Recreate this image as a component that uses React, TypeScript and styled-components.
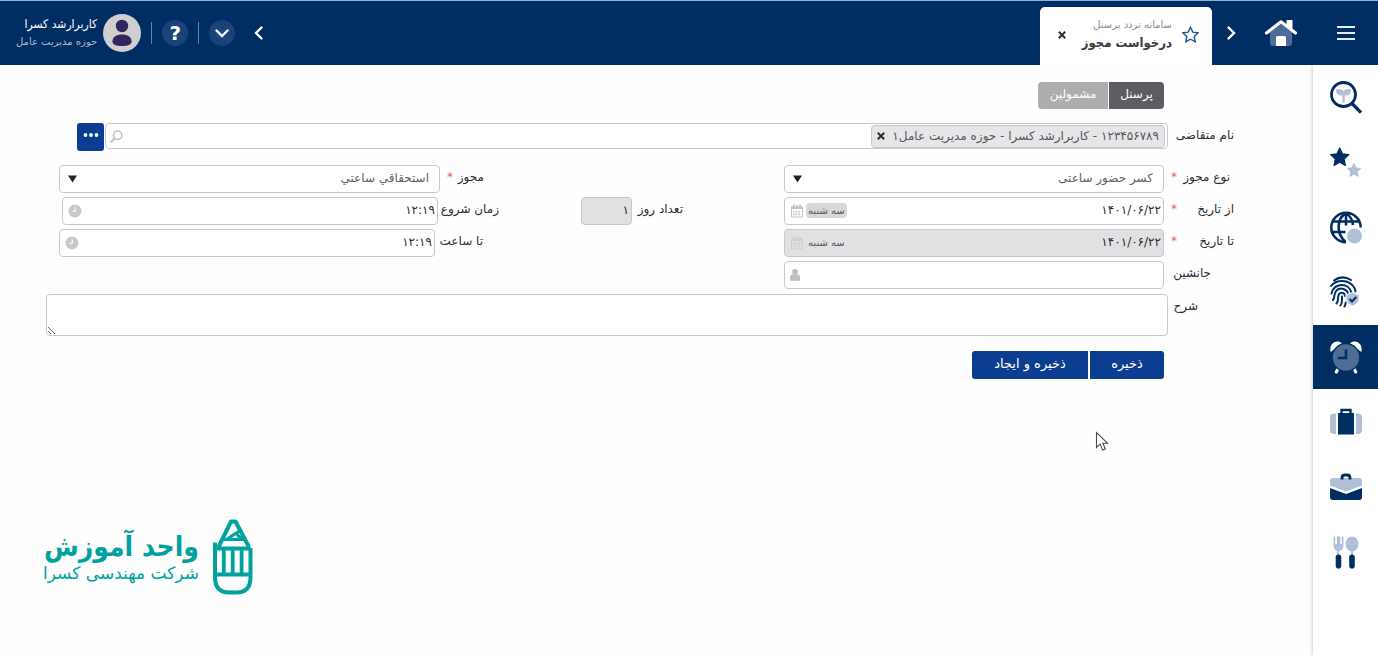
import React from "react";
import styled, { createGlobalStyle } from "styled-components";

const navy = "#002e62";
const blue = "#0b3e91";
const mist = "#b1bfd6";
const steel = "#4d6d96";
const teal = "#00a19f";
const line = "#c9c7cd";
const ink = "#2c2c34";
const condensed = `"DejaVu Sans Condensed", "DejaVu Sans", sans-serif`;

const GlobalStyle = createGlobalStyle`
  * { box-sizing: border-box; }
  html, body, #root { height: 100%; }
  body { margin: 0; background: #fefefe; color: ${ink}; }
  body, button, input, select, textarea {
    font-family: "DejaVu Sans", sans-serif;
    font-size: 12px;
  }
  button { border: 0; padding: 0; cursor: pointer; }
`;

const Page = styled.div`
  direction: rtl;
  display: flex;
  flex-direction: column;
  min-height: 100%;
`;

const Header = styled.header`
  display: flex;
  align-items: center;
  height: 65px;
  background: ${navy};
  border-top: 1px solid #8fb4d6;
  color: #fff;
`;

const HeaderButton = styled.button<{ $width: number }>`
  display: flex;
  align-items: center;
  justify-content: center;
  width: ${(p) => p.$width}px;
  height: 64px;
  background: transparent;
  color: #fff;
`;

const PageTab = styled.div`
  display: flex;
  align-items: center;
  align-self: flex-end;
  width: 172px;
  height: 58px;
  padding: 0 13px 3px 18px;
  border-radius: 5px 5px 0 0;
  background: #fff;
  color: #3a3a42;
`;

const TabTitles = styled.div`
  flex: 1;
  padding-inline-start: 10px;
  white-space: nowrap;
`;

const Overline = styled.div`
  font-size: 10px;
  line-height: 16px;
  color: #8b8b92;
`;

const TabTitle = styled.div`
  font-family: ${condensed};
  font-size: 13px;
  font-weight: bold;
  line-height: 20px;
`;

const PlainButton = styled.button`
  display: flex;
  background: transparent;
  color: inherit;
`;

const Tools = styled.div`
  display: flex;
  align-items: center;
  margin-inline-start: auto;
  padding-left: 16px;
`;

const RoundButton = styled.button`
  display: flex;
  align-items: center;
  justify-content: center;
  width: 26px;
  height: 26px;
  border-radius: 50%;
  background: #1a437a;
  color: #fff;
  font-size: 20px;
  font-weight: bold;
  line-height: 26px;
`;

const Divider = styled.span`
  width: 1px;
  height: 22px;
  margin: 0 10px;
  background: #6885a8;
`;

const UserName = styled.div`
  margin-inline-start: 6px;
  font-family: ${condensed};
  font-size: 12px;
  line-height: 18px;
  white-space: nowrap;
`;

const UserUnit = styled.div`
  font-family: "DejaVu Sans", sans-serif;
  font-size: 10px;
  line-height: 18px;
  color: #a9bdd6;
`;

const Body = styled.div`
  display: flex;
  flex: 1;
`;

const Sidebar = styled.nav`
  display: flex;
  flex-direction: column;
  gap: 1px;
  width: 65px;
  background: #fff;
  box-shadow: 0 0 4px rgba(60, 50, 70, 0.35);
`;

const SidebarLink = styled.a<{ $active?: boolean }>`
  display: flex;
  align-items: center;
  justify-content: center;
  height: 64px;
  background: ${(p) => (p.$active ? navy : "transparent")};
`;

const Main = styled.main`
  display: flex;
  flex: 1;
  flex-direction: column;
  min-width: 0;
  padding-top: 17px;
`;

const Segments = styled.div`
  display: flex;
  gap: 1px;
  margin-inline-start: 149px;
`;

const Segment = styled.button<{ $active?: boolean; $width: number }>`
  width: ${(p) => p.$width}px;
  height: 27px;
  background: ${(p) => (p.$active ? "#5c5d63" : "#adadad")};
  color: #fff;
  line-height: 24px;
  padding-bottom: 3px;
  &:first-child { border-radius: 0 4px 4px 0; }
  &:last-child { border-radius: 4px 0 0 4px; }
`;

const Form = styled.form`
  display: flex;
  flex-direction: column;
  padding: 14px 79px 0 46px;
`;

const Row = styled.div`
  display: flex;
  align-items: flex-start;
`;

const Label = styled.label<{ $width: number; $indent?: number }>`
  display: flex;
  flex: none;
  justify-content: space-between;
  width: ${(p) => p.$width}px;
  padding-inline: ${(p) => p.$indent ?? 0}px 7px;
  line-height: 24px;
  white-space: nowrap;
`;

const Required = styled.span`
  color: #f0605c;
`;

const Control = styled.div<{ $muted?: boolean; $width?: number }>`
  display: flex;
  align-items: center;
  flex: ${(p) => (p.$width ? "none" : "1")};
  width: ${(p) => (p.$width ? p.$width + "px" : "auto")};
  min-width: 0;
  height: 28px;
  padding: 0 2px 0 5px;
  border: 1px solid ${line};
  border-radius: 4px;
  background: ${(p) => (p.$muted ? "#e1e0e2" : "#fff")};
`;

const TextInput = styled.input`
  flex: 1;
  min-width: 0;
  width: 100%;
  height: 24px;
  padding: 0 0 2px;
  border: 0;
  outline: 0;
  background: transparent;
  color: ${ink};
`;

const Select = styled.select`
  flex: 1;
  min-width: 0;
  height: 26px;
  padding: 0 8px 2px;
  border: 0;
  outline: 0;
  appearance: none;
  background: transparent;
  color: #5f5f66;
`;

const ArrowBox = styled.span`
  display: flex;
  padding: 0 3px;
`;

const DayTag = styled.span<{ $plain?: boolean }>`
  margin-inline-end: 2px;
  margin-bottom: 2px;
  padding: 0 2px;
  border-radius: 4px;
  background: ${(p) => (p.$plain ? "transparent" : "#d8d7d9")};
  color: #55555c;
  font-size: 10px;
  line-height: 15px;
  white-space: nowrap;
`;

const SearchBox = styled(Control)`
  height: 26px;
  padding-left: 4px;
`;

const Chip = styled.span`
  display: flex;
  align-items: center;
  gap: 7px;
  height: 23px;
  padding: 0 5px;
  border: 1px solid ${line};
  border-radius: 4px;
  background: #e6e5e7;
  color: #55555c;
  white-space: nowrap;
`;

const MoreButton = styled.button`
  display: flex;
  justify-content: center;
  width: 27px;
  height: 28px;
  margin: 0 1px 0 31px;
  padding-top: 9px;
  border-radius: 3px;
  background: ${blue};
`;

const Fields = styled.div`
  display: grid;
  grid-template-columns: minmax(0, 45fr) 285px minmax(0, 44fr);
  gap: 4px 0;
  margin: 14px 0 5px 13px;
`;

const PrimaryField = styled(Row)`
  grid-column: 1;
`;

const DaysField = styled(Row)`
  grid-column: 2;
  padding-inline-start: 101px;
`;

const SecondaryField = styled(Row)<{ $indent?: number; $end?: number }>`
  grid-column: 3;
  padding-inline: ${(p) => p.$indent ?? 0}px ${(p) => p.$end ?? 0}px;
`;

const Description = styled.textarea`
  flex: 1;
  height: 42px;
  border: 1px solid ${line};
  border-radius: 4px;
  outline: 0;
  background: #fff;
`;

const Actions = styled.div`
  display: flex;
  gap: 2px;
  margin: 15px 70px 0 0;
`;

const ActionButton = styled.button<{ $width: number }>`
  width: ${(p) => p.$width}px;
  height: 28px;
  padding-bottom: 3px;
  background: ${blue};
  color: #fff;
  font-size: 13px;
  &:first-child { border-radius: 0 3px 3px 0; }
  &:last-child { border-radius: 3px 0 0 3px; }
`;

const Brand = styled.footer`
  display: flex;
  align-items: center;
  align-self: flex-end;
  gap: 13px;
  margin: 139px 0 0 43px;
  color: ${teal};
  white-space: nowrap;
`;

const BrandName = styled.div`
  font-family: ${condensed};
  font-size: 28px;
  font-weight: bold;
  line-height: 32px;
`;

const BrandCompany = styled.div`
  font-size: 17px;
  line-height: 20px;
`;

const Pointer = styled.svg`
  position: absolute;
  left: 1095px;
  top: 431px;
`;

const Chevron = ({ d }: { d: string }) => (
  <svg width="16" height="16" viewBox="0 0 16 16" fill="none" stroke="currentColor" strokeWidth="2.4" strokeLinecap="round">
    <path d={d} />
  </svg>
);

const Cross = ({ size }: { size: number }) => (
  <svg width={size} height={size} viewBox="0 0 8 8" stroke="#2c2c34" strokeWidth="2">
    <path d="M.8.8l6.4 6.4M7.2.8L.8 7.2" />
  </svg>
);

const SelectArrow = () => (
  <ArrowBox>
    <svg width="9" height="8" viewBox="0 0 9 8"><path d="M0 .5h9L4.5 7.5z" fill="#222" /></svg>
  </ArrowBox>
);

const CalendarIcon = ({ color }: { color: string }) => (
  <svg width="14" height="14" viewBox="0 0 14 14">
    <path d="M1 2.5h12V5H1zM3 .5h1.8v2H3zM9.2.5H11v2H9.2zM6.2 1h1.6v2H6.2z" fill={color} />
    <path d="M1.5 5v8h11V5" fill="none" stroke={color} />
    <path d="M3 7.6h8M3 10.4h8" fill="none" stroke={color} strokeWidth="1.8" strokeDasharray="1.6 1" />
  </svg>
);

const ClockIcon = () => (
  <svg width="14" height="14" viewBox="0 0 14 14">
    <circle cx="7" cy="7" r="6.5" fill="#c9c7ca" />
    <path d="M7.3 3.2v4H4.5" fill="none" stroke="#fff" strokeWidth="1.1" />
  </svg>
);

const PersonIcon = () => (
  <svg width="10" height="12" viewBox="1 0 10 12" fill="#bebdc0">
    <circle cx="6" cy="3" r="2.9" />
    <path d="M1 11.8V8.4Q1 5.6 3.4 5.4h5.2Q11 5.6 11 8.4v3.4z" />
  </svg>
);

const SearchIcon = () => (
  <svg width="13" height="13" viewBox="0 0 13 13" fill="none" stroke="#c3c1c5" strokeWidth="1.6">
    <circle cx="7.7" cy="5.2" r="4.2" /><path d="M4.7 8.3L.8 12.2" strokeWidth="2.2" />
  </svg>
);

const HomeIcon = () => (
  <svg width="34" height="28" viewBox="0 0 34 28">
    <path d="M6 13L17 5l11 8v11q0 3-3 3H9q-3 0-3-3z" fill={steel} />
    <path d="M12 27v-8.500q0-1.500 1.500-1.500h7q1.500 0 1.500 1.500V27z" fill="#fff" />
    <path d="M2.500 14L17 2.800 31.500 14" fill="none" stroke="#fff" strokeWidth="3.2" strokeLinecap="round" strokeLinejoin="round" />
    <path d="M22.500 1h6v9l-6-4z" fill="#fff" />
  </svg>
);

const starPath = "M8.5 1.2l2.3 4.9 5.3.7-3.9 3.7 1 5.3-4.7-2.6-4.7 2.6 1-5.3L.9 6.8l5.3-.7z";

const StarOutline = () => (
  <svg width="17" height="17" viewBox="0 0 17 17" fill="none" stroke="#1c5596" strokeWidth="1.4"><path d={starPath} /></svg>
);

const Avatar = () => (
  <svg width="38" height="38" viewBox="0 0 38 38">
    <circle cx="19" cy="19" r="19" fill="#d0cfcf" />
    <circle cx="19" cy="12" r="6.2" fill="#32265c" />
    <path d="M9.4 27.5c0-4.500 4-7 9.600-7s9.600 2.500 9.600 7c0 3-4 4.600-9.600 4.600s-9.600-1.600-9.600-4.600z" fill="#32265c" />
  </svg>
);

const sideIcons: { name: string; art: React.ReactNode }[] = [
  {
    name: "جستجو",
    art: (
      <>
        <path d="M6 8.500c4-1.500 6.500 0 7.500 2 1-2 4-3.500 7.500-2 0 4.500-2.500 6.500-6.300 6v7h-2.300v-7C8.500 15 6 13 6 8.500z" fill={mist} />
        <circle cx="13.500" cy="13.500" r="12" fill="none" stroke={navy} strokeWidth="2.800" />
        <path d="M22 22.500L31 31.500" stroke={navy} strokeWidth="3.200" />
      </>
    ),
  },
  {
    name: "برگزیده‌ها",
    art: (
      <>
        <path d={starPath} transform="translate(-.5 .5) scale(1.200)" fill={navy} stroke={navy} strokeLinejoin="round" />
        <path d={starPath} transform="translate(16.500 16.500) scale(.88)" fill={mist} stroke={mist} strokeLinejoin="round" />
      </>
    ),
  },
  {
    name: "وب",
    art: (
      <>
        <path d="M30.700 16.500A14.700 14.700 0 1 0 16 31.200M16 2v12.500M1.500 10.500h28M1.500 21h14M16 2C7 7 5.500 22 15.500 31M16 2c4.500 3 6.500 7 7 12" fill="none" stroke={navy} strokeWidth="2.600" />
        <circle cx="24.500" cy="25" r="9" fill="#fff" />
        <circle cx="24.500" cy="25" r="7.500" fill={mist} />
      </>
    ),
  },
  {
    name: "اثر انگشت",
    art: (
      <>
        <path d="M4 4.500Q12-1.500 21 4M1 10C6 3.500 19 2.500 24.500 12q.7 1.500 1 3.500M1.500 17.500C3 7 19 5.500 21.500 17M3 24C5.500 21 3 18 6.500 14.500c4-3.800 11-1.500 11.500 3.500M6.500 27.500C9.500 24 7 20.500 9 18c2.500-2.500 6-1 6 2M10.500 29.500c2-2.500 1.500-5.500 1.500-9M14.500 30.500q1-2 1.200-4" fill="none" stroke={navy} strokeWidth="2" strokeLinecap="round" />
        <path d="M22.500 16.500l6.500 2.300v4.700q-.8 4.500-6.500 6.500-5.700-2-6.500-6.500v-4.700z" fill={mist} stroke="#fff" />
        <path d="M19.500 23l2.500 2.500 4.200-4.500" fill="none" stroke={navy} strokeWidth="2" />
      </>
    ),
  },
  {
    name: "تردد",
    art: (
      <>
        <path d="M.7 11C-1.500 3 6-2.500 12 2.200zM31.300 11C33.500 3 26-2.500 20 2.200z" fill="#fff" />
        <path d="M7.500 28.500l-1.200 2.500M24.500 28.500l1.200 2.500" stroke="#fff" strokeWidth="3" strokeLinecap="round" />
        <circle cx="16" cy="16.500" r="13.800" fill={steel} stroke={navy} strokeWidth="1.200" />
        <path d="M16 9.500v7.500H9" fill="none" stroke={navy} strokeWidth="2.600" strokeLinecap="round" />
      </>
    ),
  },
  {
    name: "سفر",
    art: (
      <>
        <path d="M6 7.500v20.500H4Q0 28 0 24V11.500Q0 7.500 4 7.500zM26 7.500v20.500h2q4 0 4-4V11.500q0-4-4-4z" fill={mist} />
        <path d="M8 7h16v21.500H8z" fill={navy} />
        <path d="M11.500 8V4h9v4" fill="none" stroke={navy} strokeWidth="2.400" />
      </>
    ),
  },
  {
    name: "کار",
    art: (
      <>
        <path d="M0 14.500V10q0-3 3-3h26q3 0 3 3v4.500l-16 6z" fill={mist} />
        <path d="M0 17l16 6 16-6v9q0 3-3 3H3q-3 0-3-3z" fill={navy} />
        <path d="M12 8.500V7q0-3 3-3h2q3 0 3 3v1.500" fill="none" stroke={navy} strokeWidth="2.800" />
      </>
    ),
  },
  {
    name: "رستوران",
    art: (
      <>
        <path d="M3.500.5v8q0 5.500 3.700 6.500v4h2v-4q4.300-1 4.300-6.500v-8h-1.700V8h-1.600V.5H7V8H5.200V.5z" fill={mist} />
        <ellipse cx="22" cy="8" rx="6.500" ry="7.500" fill={mist} />
        <path d="M21 15h2v4h-2z" fill={mist} />
        <rect x="5.700" y="18.500" width="5.600" height="14" rx="2.800" fill={navy} />
        <rect x="19.200" y="18.500" width="5.600" height="14" rx="2.800" fill={navy} />
      </>
    ),
  },
];

const PencilLogo = () => (
  <svg width="41" height="77" viewBox="0 0 41 77" fill="none" stroke={teal} strokeWidth="4">
    <path d="M3 24.500V59q0 15.500 14 15.500h7.500q14 0 14-15.500V30" />
    <path d="M3 56.500h35.500M3 30.500h35.500" />
    <path d="M11.800 31v25M20.700 31v25M29.600 31v25" strokeWidth="3.800" />
    <path d="M6.500 29L19 3.500h4.500L37 29" strokeLinejoin="round" />
    <path d="M27.500 13L14.500 21.500H30L25 16.500" strokeWidth="3.200" />
  </svg>
);

export default function App() {
  return (
    <Page lang="fa">
      <GlobalStyle />
      <Header>
        <HeaderButton $width={65} aria-label="منو">
          <svg width="18" height="14" viewBox="0 0 18 14" stroke="#e6edf5" strokeWidth="2"><path d="M0 1h18M0 7h18M0 13h18" /></svg>
        </HeaderButton>
        <HeaderButton $width={64} aria-label="خانه"><HomeIcon /></HeaderButton>
        <HeaderButton $width={37} aria-label="زبانه قبلی"><Chevron d="M5.500 2.500L11 8l-5.500 5.500" /></HeaderButton>
        <PageTab>
          <PlainButton aria-label="افزودن به برگزیده‌ها"><StarOutline /></PlainButton>
          <TabTitles>
            <Overline>سامانه تردد پرسنل</Overline>
            <TabTitle>درخواست مجوز</TabTitle>
          </TabTitles>
          <PlainButton aria-label="بستن"><Cross size={8} /></PlainButton>
        </PageTab>
        <Tools>
          <HeaderButton $width={48} aria-label="زبانه بعدی"><Chevron d="M10.500 2.500L5 8l5.500 5.500" /></HeaderButton>
          <RoundButton aria-label="بیشتر"><Chevron d="M2.500 5.500L8 11l5.500-5.500" /></RoundButton>
          <Divider />
          <RoundButton>?</RoundButton>
          <Divider />
          <Avatar />
          <UserName>
            کاربرارشد کسرا
            <UserUnit>حوزه مدیریت عامل</UserUnit>
          </UserName>
        </Tools>
      </Header>
      <Body>
        <Sidebar>
          {sideIcons.map((item, i) => (
            <SidebarLink key={item.name} href="#" aria-label={item.name} $active={i === 4}>
              <svg width="32" height="33" viewBox="0 0 32 33">{item.art}</svg>
            </SidebarLink>
          ))}
        </Sidebar>
        <Main>
          <Segments>
            <Segment $active $width={55}>پرسنل</Segment>
            <Segment $width={70}>مشمولین</Segment>
          </Segments>
          <Form>
            <Row>
              <Label $width={66} htmlFor="applicant">نام متقاضی</Label>
              <SearchBox>
                <Chip>
                  ۱۲۳۴۵۶۷۸۹ - کاربرارشد کسرا - حوزه مدیریت عامل۱
                  <PlainButton type="button" aria-label="حذف"><Cross size={8} /></PlainButton>
                </Chip>
                <TextInput id="applicant" />
                <SearchIcon />
              </SearchBox>
              <MoreButton type="button" aria-label="انتخاب">
                <svg width="16" height="6" viewBox="0 0 16 6" fill="#fff"><circle cx="2.500" cy="3" r="1.900" /><circle cx="8" cy="3" r="1.900" /><circle cx="13.500" cy="3" r="1.900" /></svg>
              </MoreButton>
            </Row>
            <Fields>
              <PrimaryField>
                <Label $width={70} $indent={4} htmlFor="kind">نوع مجوز <Required>*</Required></Label>
                <Control>
                  <Select id="kind"><option>کسر حضور ساعتی</option></Select>
                  <SelectArrow />
                </Control>
              </PrimaryField>
              <SecondaryField $indent={15}>
                <Label $width={44} htmlFor="permit">مجوز <Required>*</Required></Label>
                <Control>
                  <Select id="permit"><option>استحقاقي ساعتي</option></Select>
                  <SelectArrow />
                </Control>
              </SecondaryField>
              <PrimaryField>
                <Label $width={70} htmlFor="from">از تاریخ <Required>*</Required></Label>
                <Control>
                  <TextInput id="from" defaultValue="۱۴۰۱/۰۶/۲۲" />
                  <DayTag>سه شنبه</DayTag>
                  <CalendarIcon color="#c3c1c5" />
                </Control>
              </PrimaryField>
              <DaysField>
                <Label $width={51} htmlFor="days">تعداد روز</Label>
                <Control $muted $width={51}><TextInput id="days" defaultValue="۱" readOnly /></Control>
              </DaysField>
              <SecondaryField $end={3}>
                <Label $width={61} htmlFor="start">زمان شروع</Label>
                <Control><TextInput id="start" defaultValue="۱۲:۱۹" /><ClockIcon /></Control>
              </SecondaryField>
              <PrimaryField>
                <Label $width={70} htmlFor="to">تا تاریخ <Required>*</Required></Label>
                <Control $muted>
                  <TextInput id="to" defaultValue="۱۴۰۱/۰۶/۲۲" readOnly />
                  <DayTag $plain>سه شنبه</DayTag>
                  <CalendarIcon color="#cfced1" />
                </Control>
              </PrimaryField>
              <SecondaryField $indent={16}>
                <Label $width={48} htmlFor="end">تا ساعت</Label>
                <Control><TextInput id="end" defaultValue="۱۲:۱۹" /><ClockIcon /></Control>
              </SecondaryField>
              <PrimaryField>
                <Label $width={70} $indent={23} htmlFor="deputy">جانشین</Label>
                <Control><TextInput id="deputy" /><PersonIcon /></Control>
              </PrimaryField>
            </Fields>
            <Row>
              <Label $width={66} $indent={36} htmlFor="note">شرح</Label>
              <Description id="note" />
            </Row>
            <Actions>
              <ActionButton type="button" $width={74}>ذخیره</ActionButton>
              <ActionButton type="button" $width={116}>ذخیره و ایجاد</ActionButton>
            </Actions>
          </Form>
          <Brand>
            <PencilLogo />
            <div>
              <BrandName>واحد آموزش</BrandName>
              <BrandCompany>شرکت مهندسی کسرا</BrandCompany>
            </div>
          </Brand>
        </Main>
      </Body>
      <Pointer width="14" height="21" viewBox="0 0 14 21" fill="#fff" stroke="#4a4850" strokeWidth="1.100">
        <path d="M1.500 1.500v15l3.600-3.400 2.600 6 2.600-1.200-2.500-5.700h4.700z" />
      </Pointer>
    </Page>
  );
}
